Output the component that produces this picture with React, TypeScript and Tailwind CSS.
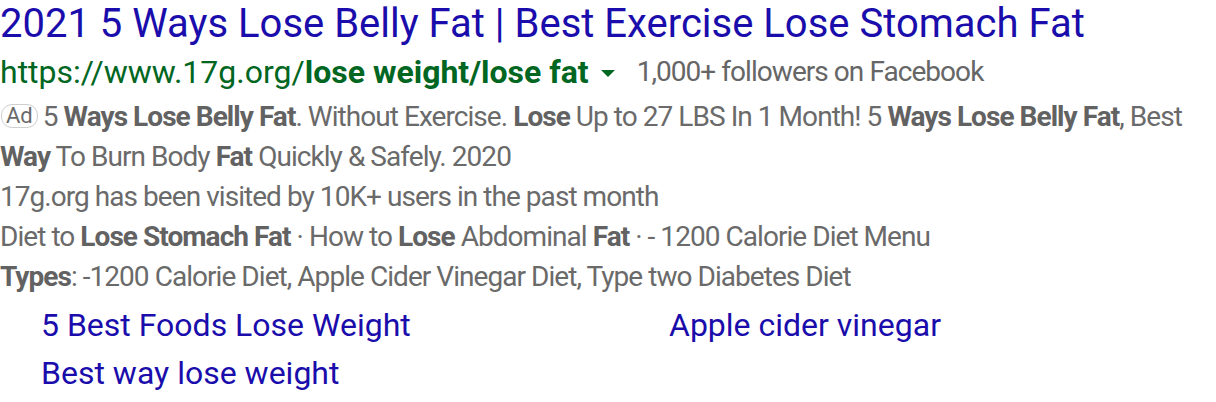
const sitelinks = [
  ['5 Best Foods Lose Weight', 'Apple cider vinegar'],
  ['Best way lose weight', ''],
];

export default function App() {
  return (
    <div className="w-[1216px] h-[402px] bg-white overflow-hidden font-['Roboto',sans-serif]">
      <div className="text-[40px] leading-[48px] text-[#1a0dab] whitespace-nowrap">
        2021 5 Ways Lose Belly Fat | Best Exercise Lose Stomach Fat
      </div>

      <div className="flex items-center h-[48px] whitespace-nowrap">
        <span className="text-[32px] leading-[48px] text-[#006621]">
          https://www.17g.org/<b className="font-bold">lose weight/lose fat</b>
        </span>
        <span className="ml-[12px] mt-[2px] w-0 h-0 border-l-[7px] border-r-[7px] border-t-[7px] border-l-transparent border-r-transparent border-t-[#006621]" />
        <span className="ml-[22px] text-[28px] tracking-[-0.95px] text-[#666666]">1,000+ followers on Facebook</span>
      </div>

      <div className="pt-[1px] text-[28px] tracking-[-0.95px] leading-[40px] text-[#6a6a6a] whitespace-nowrap [&_b]:font-bold [&_b]:text-[#626262]">
        <p>
          <span className="inline-block ml-[1px] mr-[5px] px-[4px] leading-[22px] text-[22px] tracking-normal border border-[#cfcfcf] rounded-[11px] align-[3px]">
            Ad
          </span>
          5 <b>Ways Lose Belly Fat</b>. Without Exercise. <b>Lose</b> Up to 27 LBS In 1 Month! 5 <b>Ways Lose Belly Fat</b>, Best
          <br />
          <b>Way</b> To Burn Body <b>Fat</b> Quickly &amp; Safely. 2020
        </p>
        <p>17g.org has been visited by 10K+ users in the past month</p>
        <p>
          Diet to <b>Lose Stomach Fat</b> · How to <b>Lose</b> Abdominal <b>Fat</b> · - 1200 Calorie Diet Menu
        </p>
        <p>
          <b>Types</b>: -1200 Calorie Diet, Apple Cider Vinegar Diet, Type two Diabetes Diet
        </p>
      </div>

      <div className="pl-[41px] pt-[4px] text-[32px] leading-[48px] text-[#1a0dab]">
        {sitelinks.map((row, i) => (
          <div key={i} className="grid grid-cols-[628px_1fr]">
            <span>{row[0]}</span>
            <span>{row[1]}</span>
          </div>
        ))}
      </div>
    </div>
  );
}
